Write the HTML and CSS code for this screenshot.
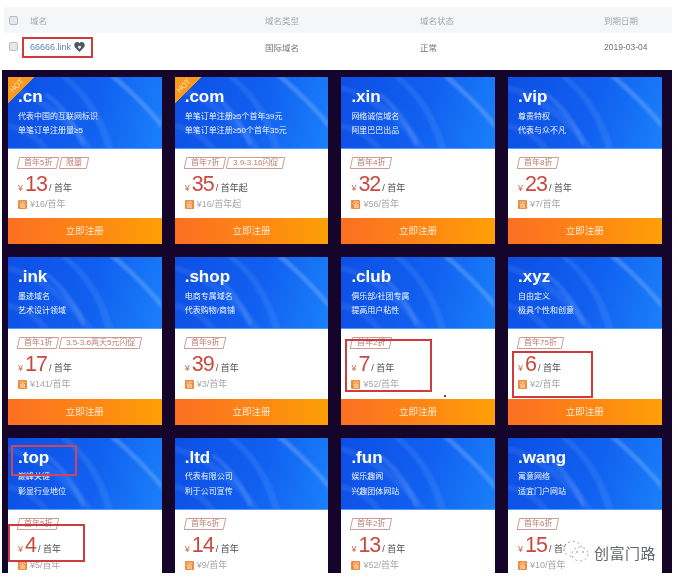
FILE: index.html
```html
<!DOCTYPE html>
<html lang="zh-CN">
<head>
<meta charset="utf-8">
<title>域名</title>
<link rel="stylesheet" href="styles.css">
</head>
<body>
<svg class="defs" width="0" height="0" aria-hidden="true">
  <symbol id="arcs" viewBox="0 0 154 72" preserveAspectRatio="none">
    <path d="M52 0 C74 16 90 42 98 72 L106 72 C98 42 80 14 60 0 Z" fill="#6aa4ff" opacity=".2"/>
    <path d="M102 0 C122 16 140 34 154 52 L154 44 C138 26 124 12 110 0 Z" fill="#a4ceff" opacity=".3"/>
    <path d="M0 14 C24 20 58 44 78 72 L86 72 C66 40 30 14 0 8 Z" fill="#6ea6ff" opacity=".16"/>
    <path d="M36 18 C52 30 66 50 74 70 L78 66 C70 46 56 28 40 16 Z" fill="#8cb8ff" opacity=".22"/>
    <path d="M0 52 C14 54 26 62 34 72 L42 72 C32 58 16 48 0 46 Z" fill="#7fb2ff" opacity=".14"/>
  </symbol>
</svg>
<div class="page">
  <div class="table">
    <div class="tr th">
      <span class="check"></span><span>域名</span><span>域名类型</span><span>域名状态</span><span>到期日期</span>
    </div>
    <div class="tr td">
      <span class="check"></span>
      <span class="domain">66666.link
        <svg class="heart" viewBox="0 0 14 13" width="11" height="10"><path d="M7 13 L1 6.8 C-1 4 1 0 4 0 C5.4 0 6.4.7 7 1.8 C7.6.7 8.6 0 10 0 C13 0 15 4 13 6.8 Z" fill="#4c5560"/><path d="M7 9.5 L4.6 6.6 L6 4.6 L7 5.6 L8 4.6 L9.4 6.6 Z" fill="#e9e9ea"/></svg>
      </span>
      <span>国际域名</span><span>正常</span><span>2019-03-04</span>
    </div>
  </div>

  <div class="panel">
    <div class="grid">
      <article class="card">
        <div class="head"><svg class="arcs"><use href="#arcs"/></svg><span class="hot"><i>HOT</i></span><h2>.cn</h2><p>代表中国的互联网标识</p><p>单笔订单注册量≥5</p></div>
        <div class="body"><div class="tags"><span class="tag"><b>首年5折</b></span><span class="tag"><b>限量</b></span></div>
          <div class="price"><small>¥</small><strong>13</strong><em>/ 首年</em></div>
          <div class="renew"><i>省</i>¥16/首年</div></div>
        <a class="btn">立即注册</a>
      </article>
      <article class="card">
        <div class="head"><svg class="arcs"><use href="#arcs"/></svg><span class="hot"><i>HOT</i></span><h2>.com</h2><p>单笔订单注册≥5个首年39元</p><p>单笔订单注册≥50个首年35元</p></div>
        <div class="body"><div class="tags"><span class="tag"><b>首年7折</b></span><span class="tag"><b>3.9-3.16闪促</b></span></div>
          <div class="price"><small>¥</small><strong>35</strong><em>/ 首年起</em></div>
          <div class="renew"><i>省</i>¥16/首年起</div></div>
        <a class="btn">立即注册</a>
      </article>
      <article class="card">
        <div class="head"><svg class="arcs"><use href="#arcs"/></svg><h2>.xin</h2><p>网络诚信域名</p><p>阿里巴巴出品</p></div>
        <div class="body"><div class="tags"><span class="tag"><b>首年4折</b></span></div>
          <div class="price"><small>¥</small><strong>32</strong><em>/ 首年</em></div>
          <div class="renew"><i>省</i>¥56/首年</div></div>
        <a class="btn">立即注册</a>
      </article>
      <article class="card">
        <div class="head"><svg class="arcs"><use href="#arcs"/></svg><h2>.vip</h2><p>尊贵特权</p><p>代表与众不凡</p></div>
        <div class="body"><div class="tags"><span class="tag"><b>首年8折</b></span></div>
          <div class="price"><small>¥</small><strong>23</strong><em>/ 首年</em></div>
          <div class="renew"><i>省</i>¥7/首年</div></div>
        <a class="btn">立即注册</a>
      </article>

      <article class="card">
        <div class="head"><svg class="arcs"><use href="#arcs"/></svg><h2>.ink</h2><p>墨迹域名</p><p>艺术设计领域</p></div>
        <div class="body"><div class="tags"><span class="tag"><b>首年1折</b></span><span class="tag"><b>3.5-3.6两天5元闪促</b></span></div>
          <div class="price"><small>¥</small><strong>17</strong><em>/ 首年</em></div>
          <div class="renew"><i>省</i>¥141/首年</div></div>
        <a class="btn">立即注册</a>
      </article>
      <article class="card">
        <div class="head"><svg class="arcs"><use href="#arcs"/></svg><h2>.shop</h2><p>电商专属域名</p><p>代表购物/商铺</p></div>
        <div class="body"><div class="tags"><span class="tag"><b>首年9折</b></span></div>
          <div class="price"><small>¥</small><strong>39</strong><em>/ 首年</em></div>
          <div class="renew"><i>省</i>¥3/首年</div></div>
        <a class="btn">立即注册</a>
      </article>
      <article class="card">
        <div class="head"><svg class="arcs"><use href="#arcs"/></svg><h2>.club</h2><p>俱乐部/社团专属</p><p>提高用户粘性</p></div>
        <div class="body"><div class="tags"><span class="tag"><b>首年2折</b></span></div>
          <div class="price"><small>¥</small><strong>7</strong><em>/ 首年</em></div>
          <div class="renew"><i>省</i>¥52/首年</div></div>
        <a class="btn">立即注册</a>
      </article>
      <article class="card">
        <div class="head"><svg class="arcs"><use href="#arcs"/></svg><h2>.xyz</h2><p>自由定义</p><p>极具个性和创意</p></div>
        <div class="body"><div class="tags"><span class="tag"><b>首年75折</b></span></div>
          <div class="price"><small>¥</small><strong>6</strong><em>/ 首年</em></div>
          <div class="renew"><i>省</i>¥2/首年</div></div>
        <a class="btn">立即注册</a>
      </article>

      <article class="card">
        <div class="head"><svg class="arcs"><use href="#arcs"/></svg><h2>.top</h2><p>巅峰关键</p><p>彰显行业地位</p></div>
        <div class="body"><div class="tags"><span class="tag"><b>首年5折</b></span></div>
          <div class="price"><small>¥</small><strong>4</strong><em>/ 首年</em></div>
          <div class="renew"><i>省</i>¥5/首年</div></div>
      </article>
      <article class="card">
        <div class="head"><svg class="arcs"><use href="#arcs"/></svg><h2>.ltd</h2><p>代表有限公司</p><p>利于公司宣传</p></div>
        <div class="body"><div class="tags"><span class="tag"><b>首年6折</b></span></div>
          <div class="price"><small>¥</small><strong>14</strong><em>/ 首年</em></div>
          <div class="renew"><i>省</i>¥9/首年</div></div>
      </article>
      <article class="card">
        <div class="head"><svg class="arcs"><use href="#arcs"/></svg><h2>.fun</h2><p>娱乐趣闻</p><p>兴趣团体网站</p></div>
        <div class="body"><div class="tags"><span class="tag"><b>首年2折</b></span></div>
          <div class="price"><small>¥</small><strong>13</strong><em>/ 首年</em></div>
          <div class="renew"><i>省</i>¥52/首年</div></div>
      </article>
      <article class="card">
        <div class="head"><svg class="arcs"><use href="#arcs"/></svg><h2>.wang</h2><p>寓意网络</p><p>适宜门户网站</p></div>
        <div class="body"><div class="tags"><span class="tag"><b>首年6折</b></span></div>
          <div class="price"><small>¥</small><strong>15</strong><em>/ 首年</em></div>
          <div class="renew"><i>省</i>¥10/首年</div></div>
      </article>
    </div>
  </div>

  <span class="mark mark-domain"></span>
  <span class="mark mark-club"></span>
  <span class="mark mark-xyz"></span>
  <span class="mark mark-top"></span>
  <span class="mark mark-topprice"></span>
  <span class="speck"></span>

  <div class="watermark">
    <svg viewBox="0 0 30 24" width="30" height="24" aria-hidden="true">
      <ellipse cx="13" cy="9" rx="9" ry="7.5" fill="#fff" stroke="#8f9296" stroke-width=".8" stroke-dasharray="2.2 2.6"/>
      <ellipse cx="20" cy="14" rx="8" ry="7" fill="#fff" stroke="#8f9296" stroke-width=".8" stroke-dasharray="2.2 2.6"/>
      <circle cx="17" cy="12" r=".8" fill="#7d8085"/><circle cx="23" cy="12" r=".8" fill="#7d8085"/>
    </svg>
    <span>创富门路</span>
  </div>
</div>
</body>
</html>
```

FILE: styles.css
```css
* { box-sizing: border-box; }
html, body { margin: 0; padding: 0; background: #fff; }
body { font-family: "Liberation Sans", "Noto Sans CJK SC", sans-serif; }
.defs { position: absolute; }
.page {
  position: relative;
  width: 678px;
  height: 580px;
  overflow: hidden;
  padding-top: 7px;
  filter: blur(.4px);
}

/* table */
.table { margin: 0 6px 0 4px; font-size: 8.5px; color: #83878d; }
.tr {
  display: grid;
  grid-template-columns: 26px 235px 155px 184px 1fr;
  align-items: center;
}
.th { height: 26px; background: #f5f6f8; color: #a3a6ab; }
.td { height: 28px; background: #fff; color: #6d7177; padding-bottom: 1px; }
.check {
  width: 9px;
  height: 9px;
  margin-left: 5px;
  border: 1px solid #b9bcc2;
  border-radius: 2px;
  background: #e6e7ea;
}
.domain { color: #5d86b4; font-size: 9px; display: flex; align-items: center; gap: 3px; }
.heart { display: block; }

/* dark panel */
.panel {
  height: 503px;
  margin: 9px 6px 0 2px;
  padding: 7px 0 0 6px;
  background: #16052a;
  overflow: hidden;
}
.grid {
  display: grid;
  grid-template-columns: repeat(4, 153.5px);
  grid-auto-rows: 167.3px;
  column-gap: 13.2px;
  row-gap: 13px;
}
.card { display: flex; flex-direction: column; background: #fff; }

.head {
  position: relative;
  height: 72px;
  padding: 11px 0 0 10px;
  overflow: hidden;
  color: #f1f6ff;
  background: linear-gradient(105deg, #0d4fe4 0%, #1160f0 55%, #1a80fa 100%);
  box-shadow: inset 0 -1px 0 #4f9dff;
}
.arcs { position: absolute; inset: 0; width: 100%; height: 100%; filter: blur(1px); }
.head h2 {
  position: relative;
  margin: 0 0 3.5px;
  font-size: 17px;
  line-height: 18px;
  font-weight: 700;
  color: #fff;
}
.head p {
  position: relative;
  margin: 0;
  font-size: 8px;
  line-height: 14.5px;
  white-space: nowrap;
}
.hot {
  position: absolute;
  top: 0;
  left: 0;
  width: 26px;
  height: 26px;
  background: linear-gradient(135deg, #f79a1d 50%, transparent 50%);
}
.hot i {
  position: absolute;
  top: 5px;
  left: 1px;
  width: 16px;
  font: 400 7.5px/8px "Liberation Sans", sans-serif;
  color: #fde3bd;
  text-align: center;
  transform: rotate(-45deg);
}

.body { flex: 1; padding: 8px 0 0 10px; }
.tags { display: flex; gap: 2px; height: 12px; }
.tag {
  display: block;
  height: 11.5px;
  padding: 0 5px;
  border: 1px solid #cf9d94;
  border-radius: 1px;
  transform: skewX(-12deg);
}
.tag b {
  display: block;
  font-weight: 400;
  font-size: 8px;
  line-height: 9.5px;
  color: #b97b70;
  white-space: nowrap;
  transform: skewX(12deg);
}
.price {
  display: flex;
  align-items: baseline;
  height: 24px;
  margin-top: 3px;
  color: #c9493f;
}
.price small { font-size: 9px; margin-right: 2px; color: #c9684f; }
.price strong { font-size: 21.5px; line-height: 24px; font-weight: 400; letter-spacing: -1px; }
.price em {
  font-style: normal;
  font-size: 9px;
  margin-left: 2px;
  color: #4a4c50;
}
.renew {
  display: flex;
  align-items: center;
  gap: 3px;
  margin-top: 3px;
  font-size: 9px;
  line-height: 11px;
  color: #a4a5a8;
}
.renew i {
  width: 9px;
  height: 9px;
  background: #ef8a3a;
  border-radius: 1px;
  color: #ffe3c6;
  font-style: normal;
  font-size: 7px;
  line-height: 9px;
  text-align: center;
}
.btn {
  display: block;
  height: 26px;
  font-size: 9.5px;
  line-height: 26px;
  text-align: center;
  color: #ffe9cd;
  background: linear-gradient(90deg, #fb6f22 0%, #fd8714 55%, #ff9f05 100%);
}

/* red annotation boxes drawn over the screenshot */
.mark { position: absolute; border: 2px solid #cf3a3f; }
.mark-domain { left: 22px; top: 37px; width: 71px; height: 21px; }
.mark-club { left: 345px; top: 339px; width: 87px; height: 53px; }
.mark-xyz { left: 512px; top: 351px; width: 81px; height: 47px; }
.mark-top { left: 11px; top: 445px; width: 66px; height: 31px; border-color: #d0445c; }
.mark-topprice { left: 8px; top: 524px; width: 77px; height: 38px; }
.speck { position: absolute; left: 444px; top: 395px; width: 2px; height: 2px; background: #4a4a50; }

.watermark {
  position: absolute;
  left: 560px;
  top: 540px;
  display: flex;
  align-items: center;
  gap: 4px;
  font-size: 15px;
  letter-spacing: .5px;
  color: #63666a;
  text-shadow: 0 0 2px #fff, 0 0 2px #fff;
}
```
